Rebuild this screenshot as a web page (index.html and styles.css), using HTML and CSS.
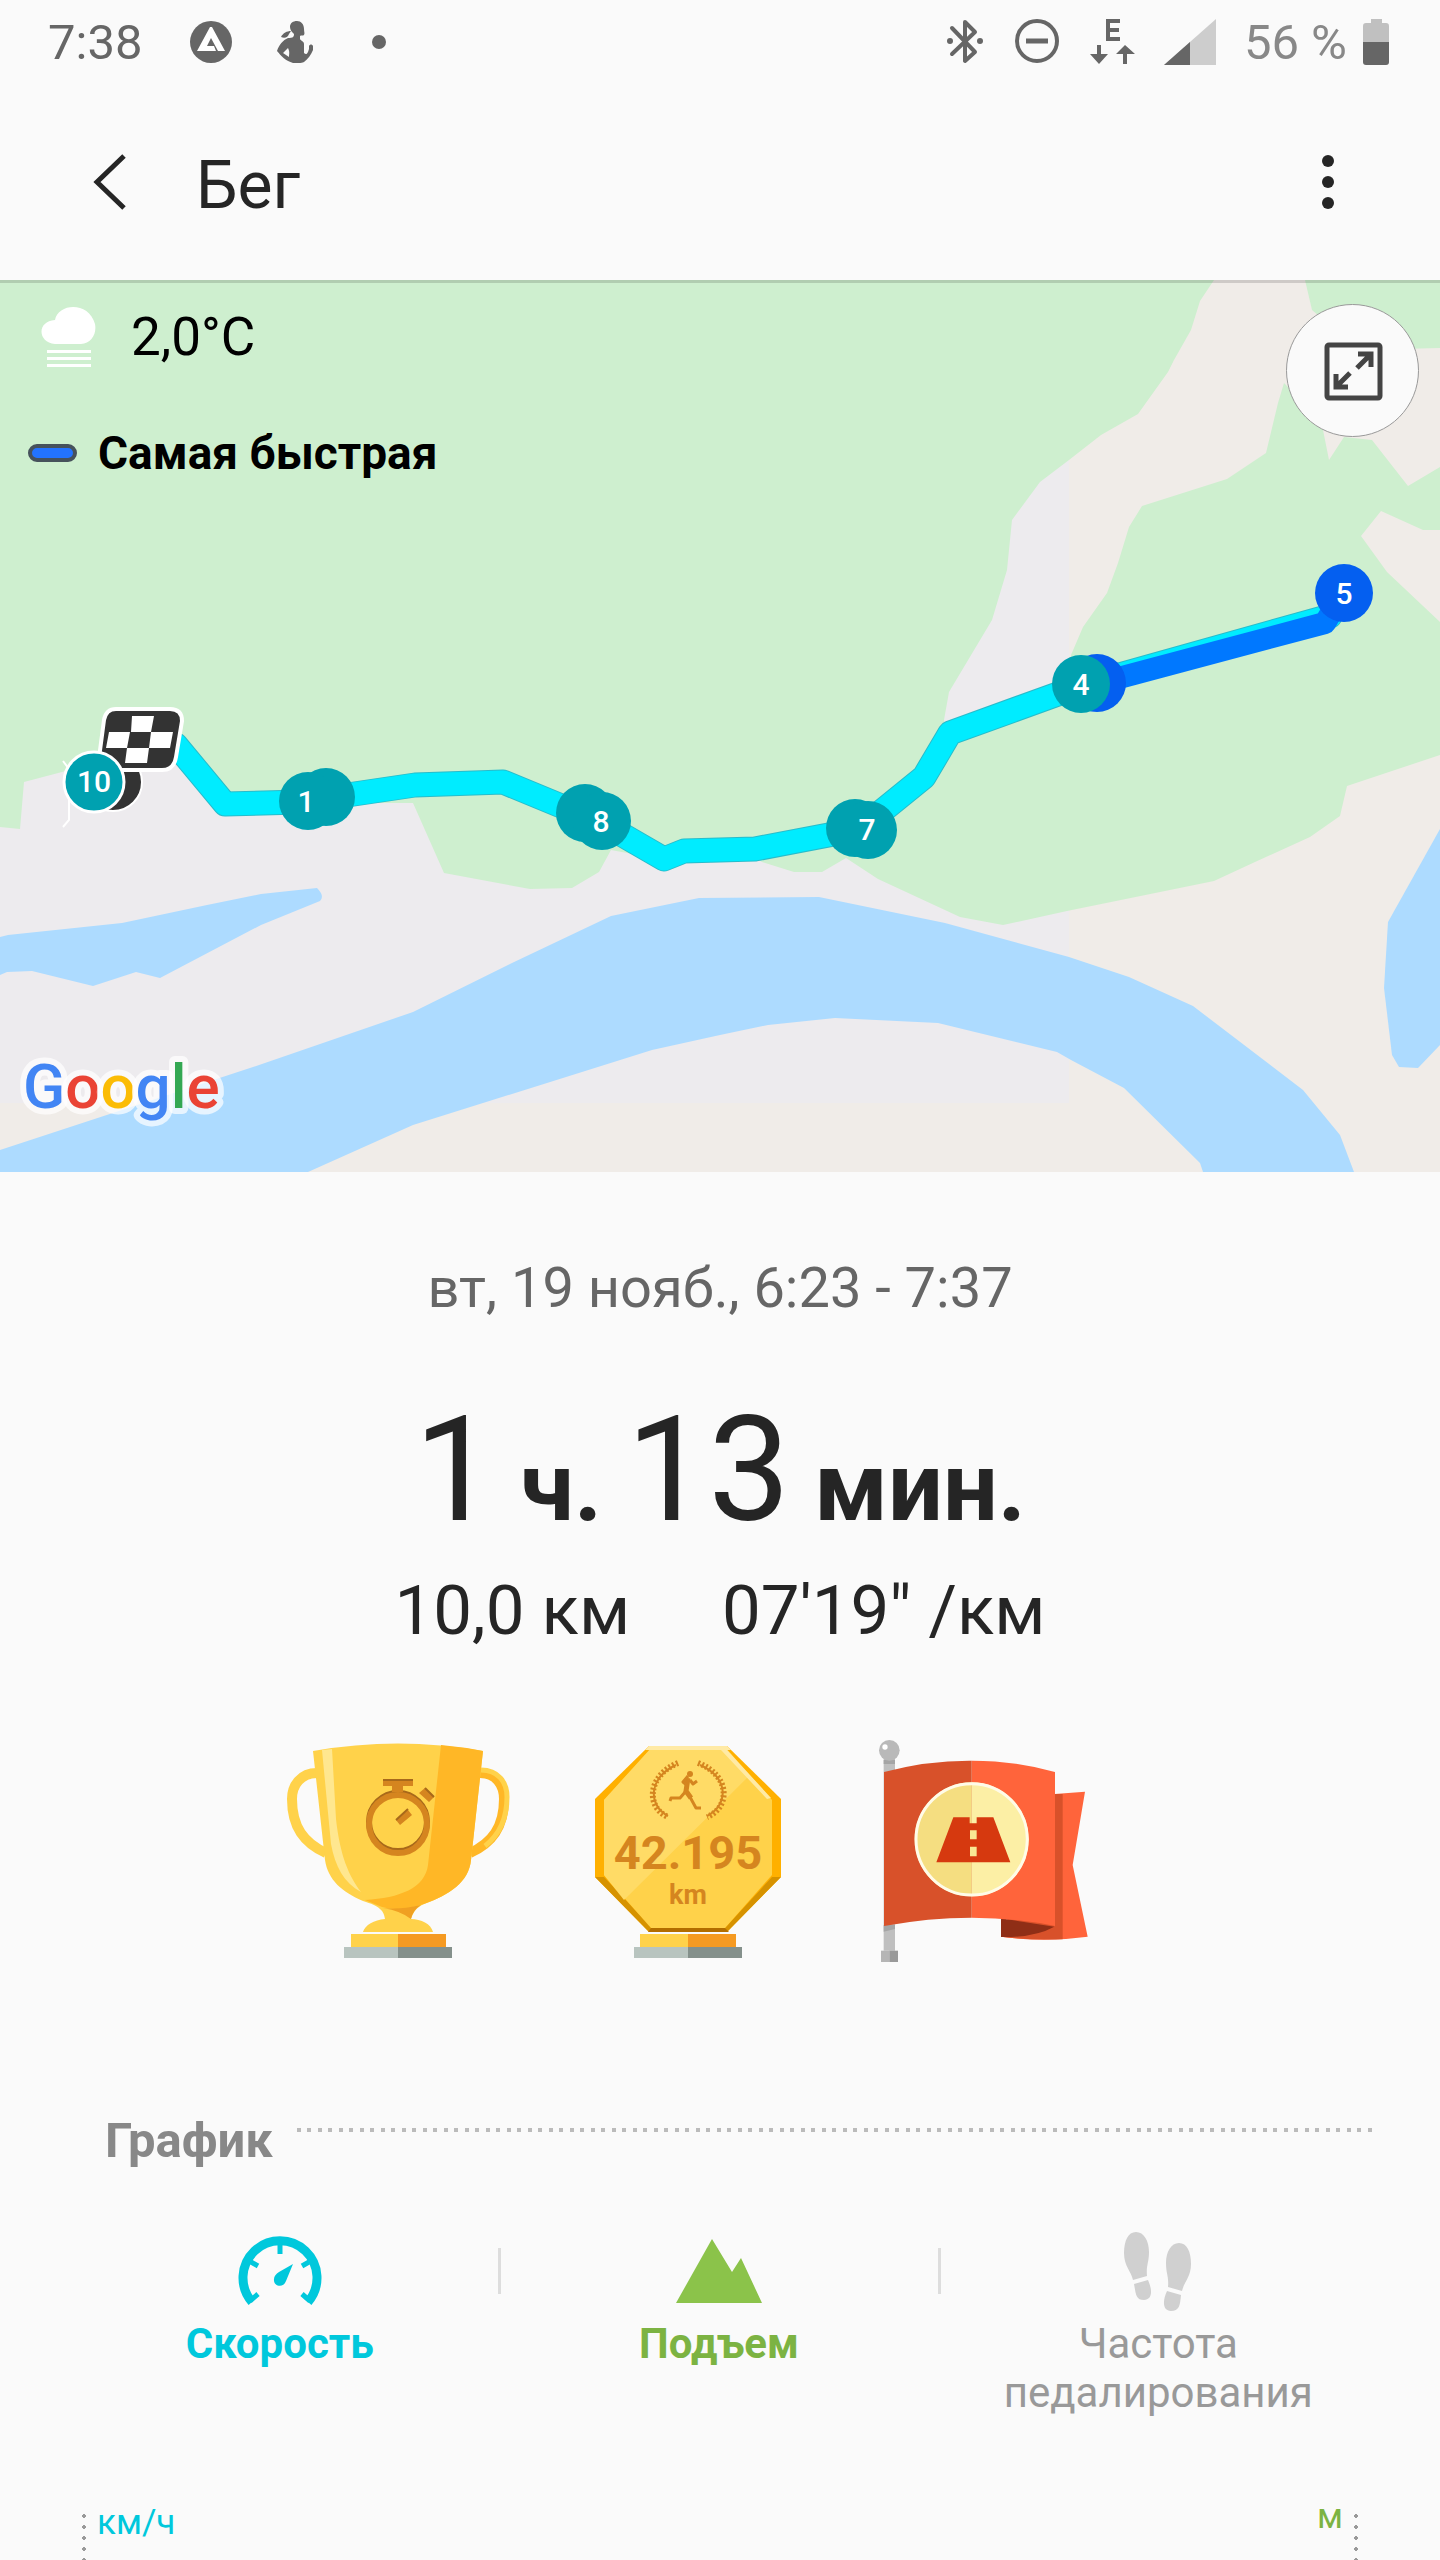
FILE: index.html
```html
<!DOCTYPE html>
<html lang="ru">
<head>
    <meta charset="UTF-8">
    <meta name="viewport" content="width=device-width, initial-scale=1.0">
    <title>Бег</title>
    <link rel="stylesheet" href="styles.css">
</head>
<body>
    <div class="status-bar">
        <span class="time">7:38</span>
        <div class="notifications">
            <svg width="42" height="46" viewBox="192 19 42 46">
                <circle cx="213" cy="42" r="21" fill="#666"/>
                <path fill="#fff" fill-rule="evenodd" d="M212 27h2l13 24h-7l-7-13-4 8h7l2 5h-19zM213 38"/>
            </svg>
            <svg width="42" height="46" viewBox="276 19 42 46" fill="#666">
                <path d="M299 21c4 0 7 3 7 8 0 3 1 4 0 6-1 1-3 0-4 1v3c1 2 4 2 4 5v9c2 2 3 1 4-1l1-3v-3c1-2 3-2 4 0v4c-2 5-5 9-9 12-1 1-5 1-11 1-7-2-12-7-16-12 2-6 6-11 11-13 5 0 6-1 6-4-2-2-4-4-4-7 0-4 3-6 7-6z"/>
                <path d="M293 31c-4 0-8 2-10 6 4 2 7 0 8-3z"/>
                <path fill="#fafafa" d="M290 48l-5 5 6 4c0-3 1-5-1-9z"/>
            </svg>
            <svg width="42" height="46" viewBox="360 19 42 46"><circle cx="381" cy="42" r="7" fill="#666"/></svg>
        </div>
        <div class="indicators">
            <svg width="44" height="46" viewBox="947 19 44 46" fill="none" stroke="#666" stroke-width="4" stroke-linejoin="round" stroke-linecap="round">
                <path d="M956 28l23 24-10 9V22l10 10-23 22"/>
                <circle cx="954" cy="41" r="3" fill="#666" stroke="none"/>
                <circle cx="984" cy="41" r="3" fill="#666" stroke="none"/>
            </svg>
            <svg width="44" height="46" viewBox="1015 19 44 46" fill="none" stroke="#666">
                <circle cx="1037" cy="41" r="20" stroke-width="4"/>
                <path d="M1026 41h22" stroke-width="5"/>
            </svg>
            <svg width="49" height="46" viewBox="1087 19 49 46" fill="none" stroke="#666" stroke-width="4">
                <path d="M1120 21h-12v18h12M1108 30h11"/>
                <path d="M1099 45v12M1125 64V52"/>
                <path fill="#666" stroke="none" d="M1090 54h18l-9 10zM1116 54h19l-10-9z"/>
            </svg>
            <svg width="52" height="46" viewBox="1164 18 52 46">
                <path fill="#cdcdcd" d="M1216 18v46h-52z"/>
                <path fill="#666" d="M1190 41v23h-26z"/>
            </svg>
            <div class="battery">
                <span>56 %</span>
                <svg width="26" height="46" viewBox="1363 19 26 46">
                    <path fill="#c0c0c0" d="M1371 19h11v4h4q3 0 3 3v17h-26V26q0-3 3-3h5z"/>
                    <path fill="#666" d="M1363 42h26v20q0 3-3 3h-20q-3 0-3-3z"/>
                </svg>
            </div>
        </div>
    </div>

    <header class="app-bar">
        <button class="icon-button" aria-label="Назад">
            <svg width="36" height="58" viewBox="91 153 36 58"><path d="M124 156l-27 26 27 26" fill="none" stroke="#252525" stroke-width="5"/></svg>
        </button>
        <h1>Бег</h1>
        <button class="icon-button" aria-label="Ещё">
            <svg width="14" height="58" viewBox="1321 153 14 58" fill="#252525">
                <circle cx="1328" cy="161" r="6"/>
                <circle cx="1328" cy="182" r="6"/>
                <circle cx="1328" cy="203" r="6"/>
            </svg>
        </button>
    </header>

    <section class="map">
        <svg class="map-canvas" viewBox="0 280 1440 892">
            <rect x="0" y="280" width="1440" height="892" fill="#f0ece8"/>
            <rect x="0" y="280" width="1069" height="823" fill="#edebee"/>
            <!-- forest -->
            <g fill="#ceefcf">
                <path d="M0 280H1214L1200 301 1191 330 1174 360 1168 372 1138 414 1101 435 1069 460 1040 482 1012 520 1007 570 992 620 949 692 944 720 950 740 920 780 860 830 740 850 665 860 611 850 599 872 572 888 530 889 444 873 413 803 230 803 183 740 62 772 24 782 20 829 0 827z"/>
                <path d="M950 735L1068 690 1071 655 1083 627 1107 593 1118 563 1129 527 1142 506 1227 479 1266 453 1278 403 1284 383 1321 420 1329 460 1344 437 1372 440 1408 486 1440 467V530H1423L1381 511 1361 536 1387 572 1440 622V755L1347 786 1340 816 1310 837 1255 862 1214 881 1067 911 1003 925 960 917 878 879 846 858 822 872H794L762 862 740 850 860 810z"/>
                <path d="M1305 280L1312 310 1360 350 1440 348V280z"/>
            </g>
            <!-- water -->
            <g fill="#addbff">
                <path d="M0 937L8 935 122 923 207 905 261 894 317 888Q325 896 320 901L261 925 160 978 136 972 93 986 32 971 7 972 0 975z"/>
                <path d="M0 1150L250 1068 413 1012 512 963 611 916 699 898 819 897 945 923 1069 957 1129 977 1193 1006 1303 1090 1340 1135 1354 1172H1203L1200 1163 1124 1088 1071 1060 1057 1052 938 1023 835 1018 768 1025 720 1035 652 1050 413 1125 308 1172H0z"/>
                <path d="M1440 829L1388 922 1384 988 1392 1055 1399 1067 1418 1068 1440 1045z"/>
            </g>
            <!-- route -->
            <path d="M63 761l6 8v51l-6 7" fill="none" stroke="#fff" stroke-width="2"/>
            <g fill="none" stroke-linejoin="round" stroke-linecap="round">
                <path stroke="#27bccb" stroke-width="25" d="M176 745L225 804 300 802 415 785 503 782 600 822 664 859 684 851 755 849 860 829 924 777 950 733 1080 686 1330 616"/>
                <path stroke="#00ecff" stroke-width="23" d="M176 745L225 804 300 802 415 785 503 782 600 822 664 859 684 851 755 849 860 829 924 777 950 733 1080 686 1330 616"/>
                <path stroke="#0078ff" stroke-width="22" d="M1100 683L1325 623 1337 603"/>
            </g>
            <!-- kilometre marks -->
            <g fill="#00a1b0">
                <circle cx="326" cy="797" r="29"/>
                <circle cx="308" cy="801" r="29"/>
                <circle cx="585" cy="813" r="29"/>
                <circle cx="602" cy="821" r="29"/>
                <circle cx="855" cy="828" r="29"/>
                <circle cx="868" cy="830" r="29"/>
                <circle cx="1097" cy="683" r="29" fill="#045ff0"/>
                <circle cx="1081" cy="684" r="29"/>
                <circle cx="1344" cy="593" r="29" fill="#045ff0"/>
            </g>
            <circle cx="113" cy="782" r="29" fill="#333" stroke="#fff" stroke-width="2"/>
            <path fill="#333" stroke="#fff" stroke-width="4" d="M116 709h54q12 0 12 12l-6 36q-2 13-14 13h-54q-10 0-9-12l5-38q2-11 12-11z"/>
            <path fill="#fff" d="M132 716h22l-3 16h22l-3 16h-21l-2 15h-22l2-15h-21l3-16h22zM130 732h21l-2 16h-22z" fill-rule="evenodd"/>
            <circle cx="94" cy="782" r="30" fill="#00a1b0" stroke="#fff" stroke-width="3"/>
            <g class="mark-labels">
                <text x="94" y="792">10</text>
                <text x="306" y="812">1</text>
                <text x="601" y="832">8</text>
                <text x="867" y="840">7</text>
                <text x="1081" y="695">4</text>
                <text x="1344" y="604">5</text>
            </g>
            <text class="google" x="23" y="1108"><tspan fill="#4285f4">G</tspan><tspan fill="#ea4335">o</tspan><tspan fill="#fbbc05">o</tspan><tspan fill="#4285f4">g</tspan><tspan fill="#34a853">l</tspan><tspan fill="#ea4335">e</tspan></text>
        </svg>
        <div class="map-info">
            <div class="weather">
                <svg width="64" height="66" viewBox="37 306 64 66" fill="#fff">
                    <path d="M55 346c-18-2-18-23 0-24 3-17 34-19 40 4 2 10-4 20-14 20z"/>
                    <path d="M47 352h44v3H47zM47 359h44v3H47zM47 366h44v3H47z"/>
                </svg>
                <span>2,0°C</span>
            </div>
            <div class="legend"><span class="pill"></span>Самая быстрая</div>
        </div>
        <button class="fullscreen" aria-label="На весь экран">
            <svg width="60" height="60" viewBox="1322 340 60 60" fill="none" stroke="#444" stroke-width="5">
                <rect x="1326" y="344" width="53" height="53" rx="2"/>
                <path d="M1357 353h13v13M1369 354l-13 13M1347 386h-12v-13M1336 385l13-13"/>
            </svg>
        </button>
    </section>

    <main>
        <section class="summary">
            <p class="date">вт, 19 нояб., 6:23 - 7:37</p>
            <p class="duration">1<b> ч. </b>13<b> мин.</b></p>
            <p class="totals"><span>10,0 км</span><span>07'19" /км</span></p>
        </section>

        <section class="badges">
            <svg width="224" height="224" viewBox="286 1740 224 224">
                <path fill="none" stroke="#ffd24a" stroke-width="10" d="M317 1773c-16 0-25 12-25 26 0 28 12 44 34 54"/>
                <path fill="none" stroke="#ffb726" stroke-width="10" d="M480 1773c16 0 24 12 24 26 0 28-12 44-34 54"/>
                <path fill="none" stroke="#ffd24a" stroke-width="5" d="M481 1770c17 0 26 12 26 27 0 22-8 38-22 49"/>
                <path fill="#ffd24a" d="M313 1751q85-15 170 0l-12 109c-2 22-22 35-47 44-7 3-11 8-13 15 10 0 20 5 22 13h-70c2-7 11-12 22-13-1-8-5-13-22-18-21-9-35-21-38-41z"/>
                <path fill="#ffb726" d="M441 1745q22 2 42 6l-12 109c-2 22-22 35-47 44q-25 8-42 3l-17-7c35-2 60-12 63-35z"/>
                <path fill="#f0a022" d="M383 1908q16 2 38-3-8 5-10 14-10-8-28-11z"/>
                <path fill="#ffe78f" d="M322 1750l10-1 4 70c4 37 13 57 25 73-17-9-26-26-30-48z"/>
                <circle cx="398" cy="1822" r="29" fill="none" stroke="#a8691a" stroke-width="6"/>
                <circle cx="398" cy="1824" r="29" fill="none" stroke="#d5851f" stroke-width="6"/>
                <path fill="#d5851f" d="M383 1780h30v6h-10v6h-11v-6h-9zM425 1788l9 9-5 5-10-9zM408 1810l4 5-12 10-4-5z"/>
                <path stroke="#a8691a" stroke-width="2" d="M383 1780h30M425 1788l9 9M408 1809l-12 11"/>
                <path fill="#ffd24a" d="M351 1934h47v13h-47z"/><path fill="#f59a22" d="M398 1934h48v13h-48z"/>
                <path fill="#b8c4bf" d="M344 1947h54v11h-54z"/><path fill="#84908b" d="M398 1947h54v11h-54z"/>
            </svg>
            <svg width="188" height="224" viewBox="594 1740 188 224">
                <path fill="#ffb000" d="M649 1746h78l54 53v78l-54 55h-78l-54-55v-78z"/>
                <path fill="#d69200" d="M595 1877h9l48 51h73l47-51h9l-54 55h-78z"/>
                <path fill="#b36e00" d="M651 1928h74l4 4h-81z"/>
                <path fill="#ffd24a" d="M653 1746h71l48 54v75l-47 53h-74l-47-53v-75z"/>
                <path fill="#ffdb66" d="M653 1746h71l25 30-125 124-20-25v-75z"/>
                <path fill="#ffeaa5" d="M649 1746h78l4 4h-86zM727 1750l44 48-4 1-46-49z"/>
                <g fill="none" stroke="#d5851f">
                    <path stroke-width="6" stroke-dasharray="2 2" d="M678 1763c-30 12-33 44-10 54M698 1763c32 12 33 44 9 54"/>
                    <path stroke-width="2" d="M676 1765c-27 12-29 40-8 51M700 1765c29 12 29 40 7 51"/>
                    <path stroke-width="5" d="M688 1778l-2 13 5 7"/>
                    <path stroke-width="3" stroke-linejoin="round" d="M688 1776l-5 6 5 4M690 1780l3 4 4-3M686 1791l-6 7h-9l-1 3M690 1797l6 11h5"/>
                    <circle cx="690" cy="1774" r="3" fill="#d5851f" stroke="none"/>
                </g>
                <text class="badge-distance" x="688" y="1869">42.195</text>
                <text class="badge-unit" x="688" y="1904">km</text>
                <path fill="#ffd24a" d="M640 1934h48v13h-48z"/><path fill="#f59a22" d="M688 1934h48v13h-48z"/>
                <path fill="#b8c4bf" d="M634 1947h54v11h-54z"/><path fill="#84908b" d="M688 1947h54v11h-54z"/>
            </svg>
            <svg width="288" height="224" viewBox="258 90 864 672">
                <path fill="#bfbfbf" d="M311 140h34v582h-34z"/><path fill="#a5a5a5" d="M311 150h34v12h-34zM311 645h34v12l-34 8z"/>
                <path fill="#b5b5b5" d="M303 722h25v34h-25z"/><path fill="#999" d="M328 722h26v34h-26z"/>
                <circle cx="328" cy="121" r="31" fill="#b9b9b9"/><circle cx="315" cy="111" r="8" fill="#fff"/>
                <path fill="#ff643b" d="M824 252l91-7-37 220 45 215q-130 18-260 0z"/>
                <path fill="#d8512a" d="M824 252h24v436q-100 3-185-8z"/>
                <path fill="#8f2e16" d="M663 625l160 25q-60 33-160 31z"/>
                <path fill="#ff643b" d="M575 152q130 0 250 34v462q-120-24-250-25z"/>
                <path fill="#d8512a" d="M312 186q130-35 263-34v471q-130 0-263 25z"/>
                <path fill="#f5de81" d="M575 217a171 171 0 0 0 0 342z"/><path fill="#fcefa5" d="M575 217a171 171 0 0 1 0 342z"/>
                <circle cx="575" cy="388" r="167" fill="none" stroke="#fffbe8" stroke-width="9"/>
                <path fill="#d6390f" d="M520 322h49v18h21v-18h50l51 135H469z"/>
                <path fill="#f9e794" d="M570 361h20v27h-20zM570 410h20v29h-20z"/>
            </svg>
        </section>

        <section class="graph">
            <h2>График</h2>
            <div class="tabs">
                <button class="tab speed">
                    <svg width="90" height="80" viewBox="235 2231 90 80" fill="none" stroke="#00c8dc">
                        <path stroke-width="9" d="M252 2302a37 37 0 1 1 56 0"/>
                        <path stroke-width="5" d="M280 2244v10M251 2262l7 4M309 2262l-7 4M250 2301l8-7M310 2301l-8-7"/>
                        <path fill="#00c8dc" stroke="none" d="M293 2264l-7 17c-3 8-13 5-12-2 0-3 2-5 5-7z"/>
                    </svg>
                    Скорость
                </button>
                <button class="tab climb">
                    <svg width="90" height="80" viewBox="674 2231 90 80"><path fill="#8bc34a" d="M676 2303l36-64 20 33 9-14 21 45z"/></svg>
                    Подъем
                </button>
                <button class="tab cadence">
                    <svg width="90" height="80" viewBox="1114 2231 90 80" fill="#d0d0d0">
                        <path d="M1137 2232c8 0 13 9 13 20s-3 13-2 24l-14 4c-2-9-9-14-9-27 0-12 4-21 12-21zM1135 2284l14-4c5 11 4 20-4 20s-8-5-10-16z"/>
                        <path d="M1180 2243c-8 0-13 9-13 20s3 13 2 24l14 4c2-9 9-14 9-27 0-12-4-21-12-21zM1182 2295l-14-4c-5 11-4 20 4 20s9-5 10-16z"/>
                    </svg>
                    Частота педалирования
                </button>
            </div>
            <div class="chart">
                <div class="axis speed"><span>км/ч</span></div>
                <div class="axis climb"><span>м</span></div>
            </div>
        </section>
    </main>
</body>
</html>
```
FILE: styles.css
```css
* {
    box-sizing: border-box;
}
body {
    margin: 0;
    min-height: 100vh;
    display: flex;
    flex-direction: column;
    font-family: Roboto, "Noto Sans", sans-serif;
    background-color: #fafafa;
    color: #252525;
}
h1, h2, p {
    margin: 0;
}
svg {
    display: block;
    flex-shrink: 0;
}
button {
    padding: 0;
    border: none;
    background: none;
    font-family: inherit;
    color: inherit;
    cursor: pointer;
}

/* status bar */
.status-bar {
    display: flex;
    align-items: center;
    gap: 48px;
    height: 84px;
    padding: 4px 51px 4px 48px;
    font-size: 49px;
    color: #666;
}
.notifications {
    display: flex;
    gap: 42px;
}
.indicators {
    display: flex;
    align-items: center;
    gap: 28px;
    margin-left: auto;
}
.battery {
    display: flex;
    align-items: center;
    gap: 16px;
    color: #888;
}

/* title */
.app-bar {
    display: flex;
    align-items: center;
    height: 196px;
    padding: 0 105px 0 91px;
}
.app-bar h1 {
    flex: 1;
    margin-left: 69px;
    padding-top: 6px;
    font-size: 66px;
    font-weight: 400;
}

/* map */
.map {
    position: relative;
}
.map::before {
    content: "";
    position: absolute;
    top: 0;
    left: 0;
    right: 0;
    height: 3px;
    background-color: rgba(0, 0, 0, 0.14);
}
.map-canvas {
    width: 100%;
    height: auto;
}
.mark-labels {
    font-size: 30px;
    font-weight: 500;
    fill: #fff;
    text-anchor: middle;
}
.google {
    font-size: 62px;
    font-weight: 500;
    stroke: rgba(255, 255, 255, 0.7);
    stroke-width: 12px;
    stroke-linejoin: round;
    paint-order: stroke;
}
.map-info {
    position: absolute;
    top: 24px;
    left: 28px;
    color: #000;
}
.weather {
    display: flex;
    align-items: center;
    gap: 30px;
    padding-left: 9px;
    font-size: 53px;
    line-height: 66px;
}
.legend {
    display: flex;
    align-items: center;
    gap: 21px;
    margin-top: 56px;
    font-size: 46px;
    font-weight: 700;
    line-height: 54px;
}
.pill {
    width: 49px;
    height: 18px;
    border: 4px solid #46525c;
    border-radius: 9px;
    background-color: #2373ff;
}
.fullscreen {
    position: absolute;
    top: 24px;
    right: 21px;
    display: flex;
    align-items: center;
    justify-content: center;
    width: 133px;
    height: 133px;
    border: 1px solid #999;
    border-radius: 50%;
    background-color: #fafafa;
}

/* workout summary */
main {
    flex: 1;
    display: flex;
    flex-direction: column;
}
.summary {
    padding-top: 83px;
    text-align: center;
}
.date {
    font-size: 56px;
    line-height: 66px;
    color: #666;
}
.duration {
    margin-top: 77px;
    font-size: 146px;
    line-height: 146px;
}
.duration b {
    font-size: 97px;
    line-height: 97px;
}
.totals {
    display: flex;
    justify-content: center;
    gap: 92px;
    margin-top: 26px;
    font-size: 69px;
    line-height: 82px;
}
.badges {
    display: flex;
    justify-content: center;
    gap: 84px;
    margin-top: 88px;
}
.badge-distance, .badge-unit {
    font-size: 47px;
    font-weight: 700;
    fill: #d5851f;
    text-anchor: middle;
}
.badge-unit {
    font-size: 27px;
}

/* graph */
.graph {
    flex: 1;
    display: flex;
    flex-direction: column;
    margin-top: 148px;
}
.graph h2 {
    display: flex;
    gap: 24px;
    padding: 0 66px 0 105px;
    font-size: 49px;
    line-height: 58px;
    color: #888;
}
.graph h2::after {
    content: "";
    flex: 1;
    height: 4px;
    margin-top: 16px;
    background: linear-gradient(90deg, #bbb 4px, transparent 4px 10px, #bbb 10px 14px, transparent 14px) 0 0 / 21px 4px repeat-x;
}
.tabs {
    display: flex;
    margin: 61px 62px 0 60px;
}
.tab {
    position: relative;
    flex: 1 1 0;
    display: flex;
    flex-direction: column;
    align-items: center;
    gap: 8px;
    font-size: 42px;
    font-weight: 700;
    line-height: 49px;
}
.tab + .tab::before {
    content: "";
    position: absolute;
    top: 17px;
    left: -1px;
    width: 3px;
    height: 46px;
    background-color: #ddd;
}
.speed {
    color: #00c8dc;
}
.climb {
    color: #7cb342;
}
.cadence {
    font-weight: 400;
    color: #999;
}
.chart {
    flex: 1;
    display: flex;
    justify-content: space-between;
    min-height: 64px;
    margin: 79px 82px 0;
    font-size: 35px;
    line-height: 42px;
}
.axis {
    display: flex;
    gap: 11px;
}
.axis::before {
    content: "";
    width: 4px;
    margin-top: 18px;
    background: radial-gradient(circle at 2px 2px, #999 2px, transparent 2px) 0 0 / 4px 11px repeat-y;
}
.axis.speed span {
    padding-top: 6px;
}
.axis.climb {
    flex-direction: row-reverse;
}
```
